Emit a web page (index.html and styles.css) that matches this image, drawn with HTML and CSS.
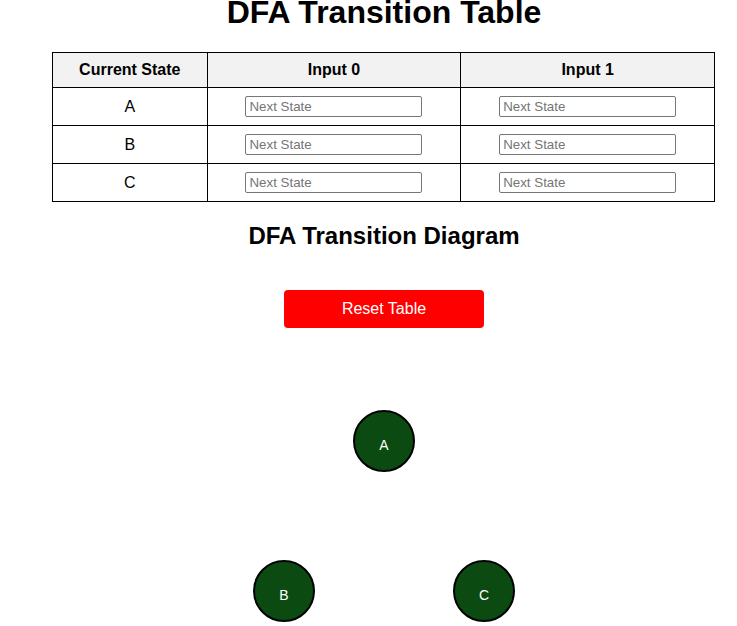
FILE: index.html
```html
<!DOCTYPE html>
<html lang="en">
<head>
<meta charset="utf-8">
<title>DFA Transition Table</title>
<link rel="stylesheet" href="styles.css">
</head>
<body>
<main class="page">
  <h1 class="title">DFA Transition Table</h1>
  <table class="dfa-table">
    <thead>
      <tr><th class="col-state">Current State</th><th class="col-in0">Input 0</th><th class="col-in1">Input 1</th></tr>
    </thead>
    <tbody>
      <tr><td>A</td><td><input class="next" type="text" placeholder="Next State"></td><td><input class="next" type="text" placeholder="Next State"></td></tr>
      <tr><td>B</td><td><input class="next" type="text" placeholder="Next State"></td><td><input class="next" type="text" placeholder="Next State"></td></tr>
      <tr><td>C</td><td><input class="next" type="text" placeholder="Next State"></td><td><input class="next" type="text" placeholder="Next State"></td></tr>
    </tbody>
  </table>
  <h2 class="subtitle">DFA Transition Diagram</h2>
  <button class="reset" type="button">Reset Table</button>
  <svg class="diagram" width="400" height="300" viewBox="0 0 400 300">
    <g class="node">
      <circle cx="200" cy="93" r="30"></circle>
      <text x="200" y="102">A</text>
    </g>
    <g class="node">
      <circle cx="100" cy="243" r="30"></circle>
      <text x="100" y="252">B</text>
    </g>
    <g class="node">
      <circle cx="300" cy="243" r="30"></circle>
      <text x="300" y="252">C</text>
    </g>
  </svg>
</main>
</body>
</html>
```

FILE: styles.css
```css
html, body {
  margin: 0;
  padding: 0;
  background: #fff;
  overflow: hidden;
}
body {
  font-family: "Liberation Sans", Arial, sans-serif;
  color: #000;
}
.page {
  box-sizing: border-box;
  width: 737px;
  padding-left: 31px;
  display: flex;
  flex-direction: column;
  align-items: center;
}
.title {
  font-size: 32px;
  font-weight: bold;
  margin: -6px 0 21px;
  line-height: 37px;
}
.dfa-table {
  border-collapse: collapse;
  width: 663px;
  margin-left: -1px;
  font-size: 16px;
}
.dfa-table th,
.dfa-table td {
  border: 1px solid #000;
  text-align: center;
  padding: 8px;
}
.dfa-table th {
  background: #f2f2f2;
  font-weight: bold;
  height: 18px;
}
.dfa-table td {
  height: 21px;
}
.col-state { width: 138px; }
.col-in0 { width: 237px; }
.col-in1 { width: 237px; }
.next {
  box-sizing: border-box;
  width: 177px;
  height: 21px;
  padding: 1px 3px;
  border: 1px solid #767676;
  border-radius: 2px;
  font-family: "Liberation Sans", Arial, sans-serif;
  font-size: 13.333px;
  vertical-align: middle;
  background: #fff;
}
.next::placeholder {
  color: #757575;
}
.subtitle {
  font-size: 24px;
  font-weight: bold;
  margin: 20px 0 20px;
  line-height: 28px;
}
.reset {
  width: 200px;
  height: 38px;
  margin-top: 20px;
  background: #ff0000;
  color: #fff;
  border: none;
  border-radius: 4px;
  font-family: "Liberation Sans", Arial, sans-serif;
  font-size: 16px;
  padding: 0;
}
.diagram {
  display: block;
  margin-top: 20px;
  overflow: visible;
}
.node circle {
  fill: #0b4a10;
  stroke: #000;
  stroke-width: 2;
}
.node text {
  fill: #fff;
  font-family: "Liberation Sans", Arial, sans-serif;
  font-size: 14px;
  text-anchor: middle;
}
```
